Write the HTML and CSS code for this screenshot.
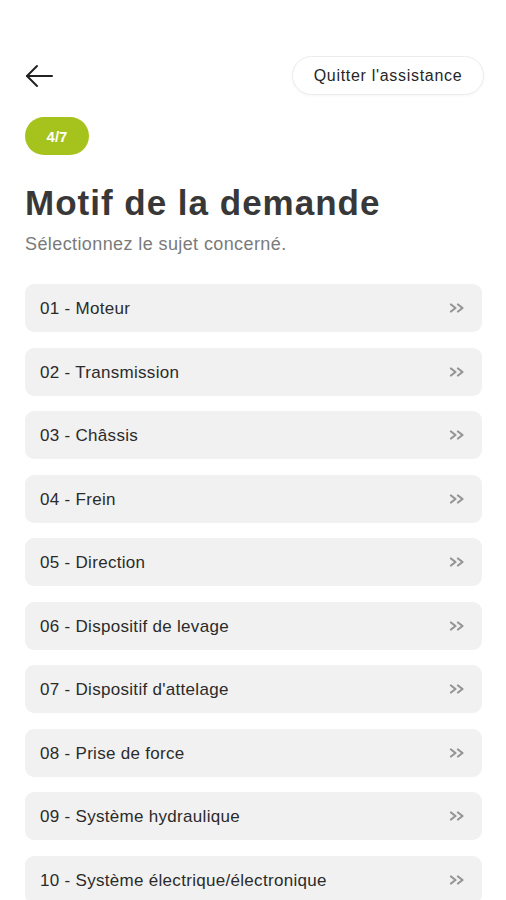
FILE: index.html
```html
<!DOCTYPE html>
<html lang="fr">
<head>
  <meta charset="UTF-8">
  <title>Motif de la demande</title>
  <link rel="stylesheet" href="styles.css">
</head>
<body>
  <main class="page">
    <header class="topbar">
      <button class="back" aria-label="Retour">
        <svg width="28" height="24" viewBox="0 0 28 24" fill="none" stroke="#222" stroke-width="2" stroke-linecap="round" stroke-linejoin="round">
          <path d="M27 12H2"/>
          <path d="M12 2L2 12l10 10"/>
        </svg>
      </button>
      <button class="quit">Quitter l'assistance</button>
    </header>

    <span class="step">4/7</span>

    <h1>Motif de la demande</h1>
    <p class="hint">Sélectionnez le sujet concerné.</p>

    <!-- subject list -->
    <ul class="subjects">
      <li class="subject"><span>01 - Moteur</span><svg class="chev" width="16" height="10" viewBox="0 0 16 10"><path d="M2 1.5L6.5 5 2 8.5M9 1.5L13.5 5 9 8.5"/></svg></li>
      <li class="subject"><span>02 - Transmission</span><svg class="chev" width="16" height="10" viewBox="0 0 16 10"><path d="M2 1.5L6.5 5 2 8.5M9 1.5L13.5 5 9 8.5"/></svg></li>
      <li class="subject"><span>03 - Châssis</span><svg class="chev" width="16" height="10" viewBox="0 0 16 10"><path d="M2 1.5L6.5 5 2 8.5M9 1.5L13.5 5 9 8.5"/></svg></li>
      <li class="subject"><span>04 - Frein</span><svg class="chev" width="16" height="10" viewBox="0 0 16 10"><path d="M2 1.5L6.5 5 2 8.5M9 1.5L13.5 5 9 8.5"/></svg></li>
      <li class="subject"><span>05 - Direction</span><svg class="chev" width="16" height="10" viewBox="0 0 16 10"><path d="M2 1.5L6.5 5 2 8.5M9 1.5L13.5 5 9 8.5"/></svg></li>
      <li class="subject"><span>06 - Dispositif de levage</span><svg class="chev" width="16" height="10" viewBox="0 0 16 10"><path d="M2 1.5L6.5 5 2 8.5M9 1.5L13.5 5 9 8.5"/></svg></li>
      <li class="subject"><span>07 - Dispositif d'attelage</span><svg class="chev" width="16" height="10" viewBox="0 0 16 10"><path d="M2 1.5L6.5 5 2 8.5M9 1.5L13.5 5 9 8.5"/></svg></li>
      <li class="subject"><span>08 - Prise de force</span><svg class="chev" width="16" height="10" viewBox="0 0 16 10"><path d="M2 1.5L6.5 5 2 8.5M9 1.5L13.5 5 9 8.5"/></svg></li>
      <li class="subject"><span>09 - Système hydraulique</span><svg class="chev" width="16" height="10" viewBox="0 0 16 10"><path d="M2 1.5L6.5 5 2 8.5M9 1.5L13.5 5 9 8.5"/></svg></li>
      <li class="subject"><span>10 - Système électrique/électronique</span><svg class="chev" width="16" height="10" viewBox="0 0 16 10"><path d="M2 1.5L6.5 5 2 8.5M9 1.5L13.5 5 9 8.5"/></svg></li>
    </ul>
  </main>
</body>
</html>
```

FILE: styles.css
```css
* { box-sizing: border-box; margin: 0; padding: 0; }

body {
  font-family: 'Liberation Sans', Arial, sans-serif;
  background: #fff;
  color: #2b2b2b;
  overflow: hidden;
}

.page {
  padding: 56px 24px 0 25px;
  display: flex;
  flex-direction: column;
  align-items: flex-start;
}

.topbar {
  width: calc(100% + 2px);
  display: flex;
  align-items: center;
  justify-content: space-between;
}

.back {
  background: none;
  border: none;
  display: flex;
  cursor: pointer;
}

.quit {
  height: 39px;
  width: 192px;
  background: #fff;
  border: 1px solid #ececec;
  border-radius: 20px;
  box-shadow: 0 1px 3px rgba(0,0,0,0.04);
  font-family: inherit;
  font-size: 16px;
  letter-spacing: 0.7px;
  color: #262626;
  cursor: pointer;
}

.step {
  margin-top: 22px;
  width: 64px;
  height: 38px;
  border-radius: 19px;
  background: #a6c21d;
  color: #fff;
  font-weight: bold;
  font-size: 15px;
  display: flex;
  align-items: center;
  justify-content: center;
}

h1 {
  margin-top: 28px;
  font-size: 35px;
  line-height: 40px;
  letter-spacing: 1px;
  color: #383838;
}

.hint {
  margin-top: 11px;
  font-size: 18px;
  line-height: 20px;
  letter-spacing: 0.4px;
  color: #7a7a7a;
}

.subjects {
  list-style: none;
  width: 100%;
  margin-top: 30px;
  display: flex;
  flex-direction: column;
  gap: 15.5px;
}

.subject {
  height: 48px;
  background: #f1f1f1;
  border-radius: 9px;
  padding: 0 17px 0 15px;
  display: flex;
  align-items: center;
  justify-content: space-between;
  font-size: 17px;
  letter-spacing: 0.3px;
  color: #2b2b2b;
  cursor: pointer;
}

.subject span { padding-top: 2px; }

.chev {
  fill: none;
  stroke: #959595;
  stroke-width: 2.2;
  stroke-linecap: round;
  stroke-linejoin: round;
}
```
